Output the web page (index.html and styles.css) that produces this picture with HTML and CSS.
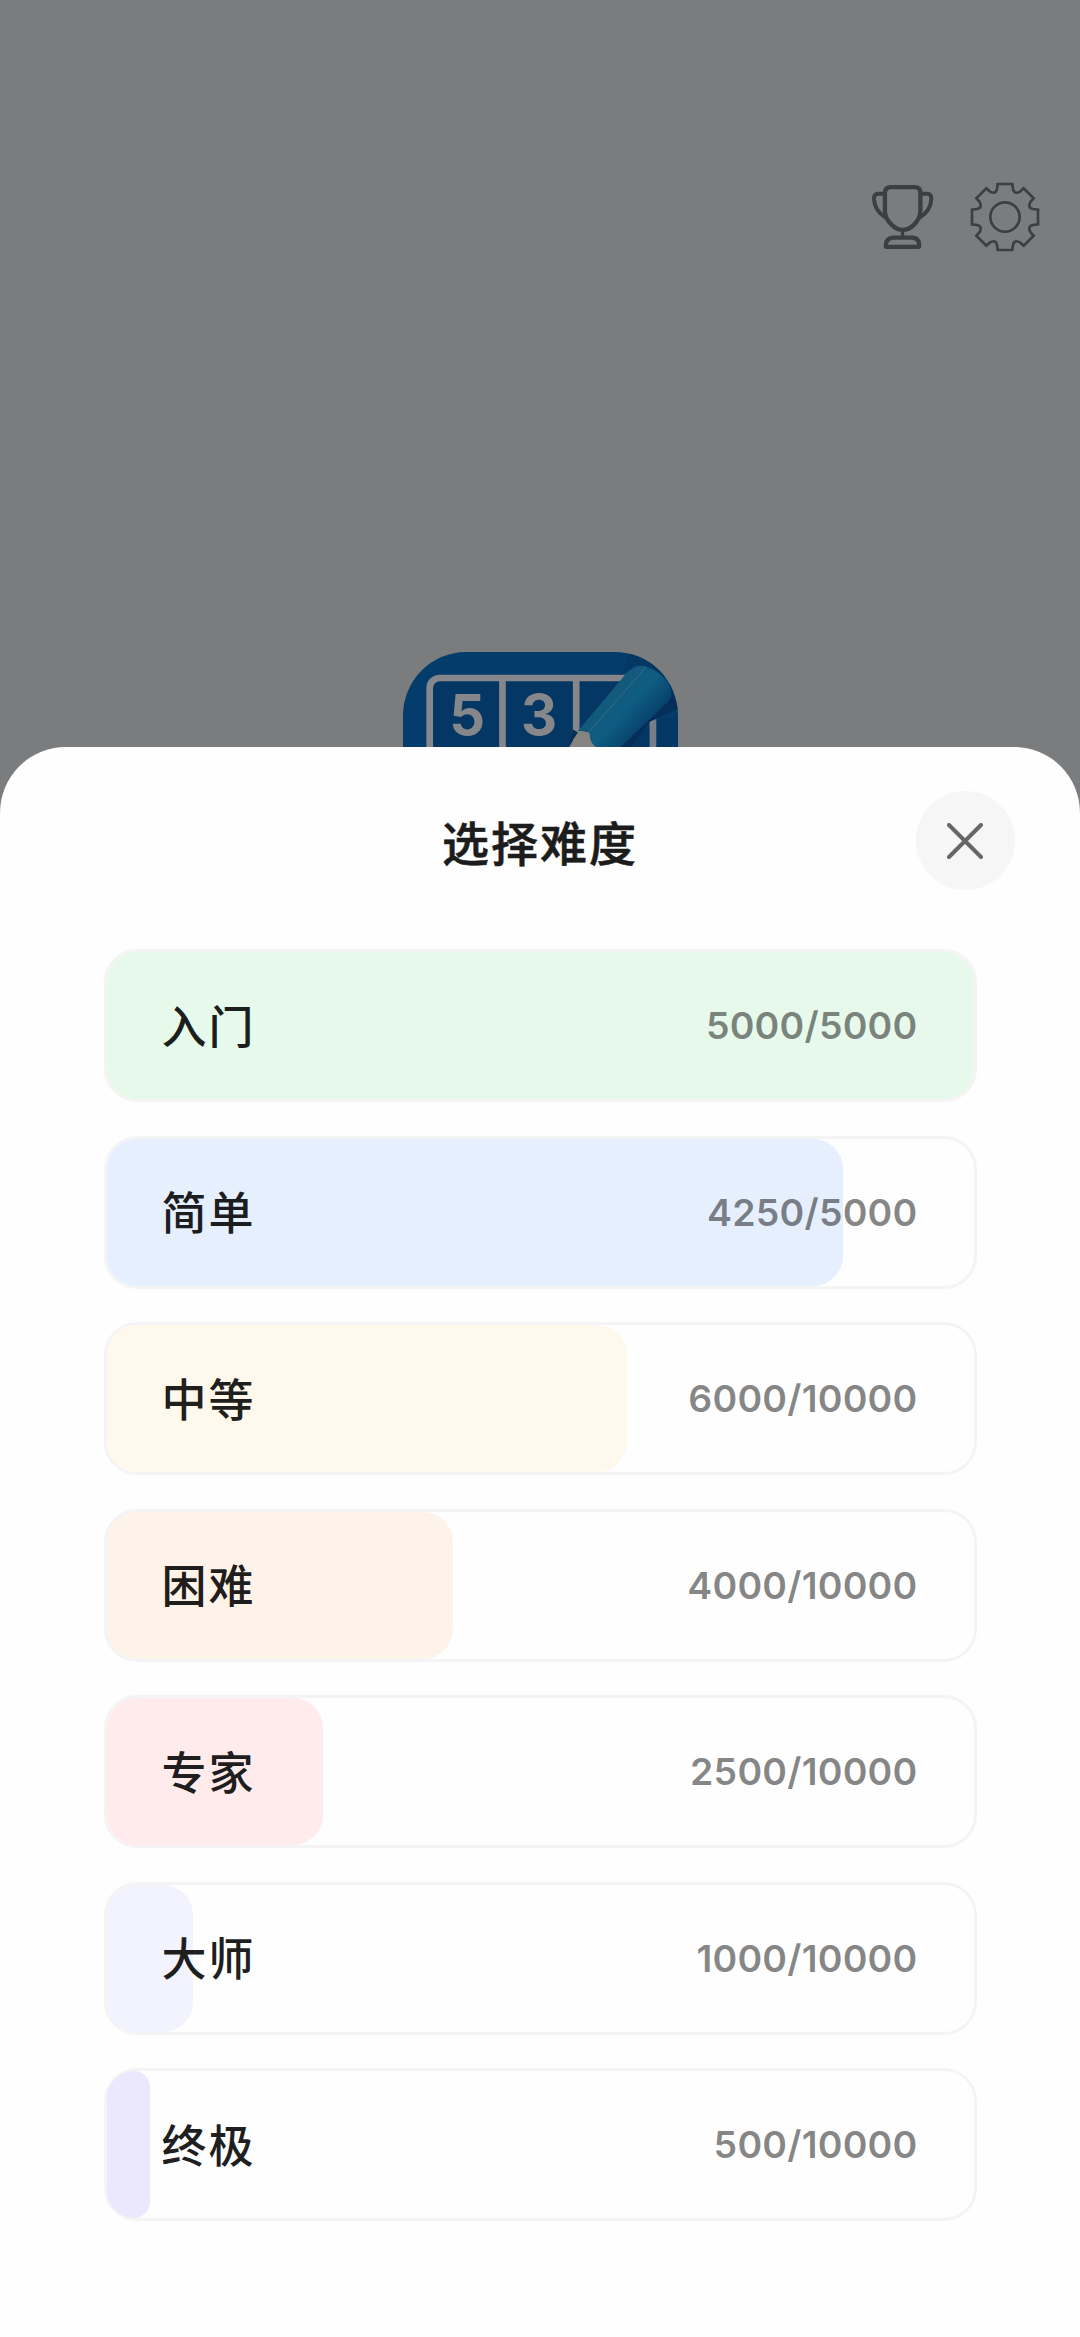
FILE: index.html
```html
<!DOCTYPE html>
<html lang="zh-CN">
<head>
<meta charset="utf-8">
<title>选择难度</title>
<link rel="stylesheet" href="styles.css">
</head>
<body>
<div class="home">
  <header class="toolbar">
    <svg class="trophy" viewBox="90 70 190 204" fill="none" stroke="#3b3f42" stroke-linejoin="round">
      <path stroke-width="13" d="M150 82H222Q239 82 239 100V152C239 186 208 211 186 211C164 211 132 186 132 152V100Q132 82 150 82Z"/>
      <path stroke-width="12" d="M130 102H112Q99 102 99 118C100 144 112 160 136 175M241 102H260Q272 102 272 118C271 144 259 160 235 175"/>
      <path stroke-width="10" d="M185 211V234"/>
      <path stroke-width="13" d="M135 262V254Q137 236 156 234H216Q234 236 235 254V262Z"/>
    </svg>
    <svg class="gear" viewBox="-105 -105 210 210" fill="none" stroke="#3b3f42" stroke-width="8">
      <path d="M-22-99L22-99 24-84Q28-66 46-77L56-86 86-56 77-46Q66-28 84-24L99-22 99 22 84 24Q66 28 77 46L86 56 56 86 46 77Q28 66 24 84L22 99-22 99-24 84Q-28 66-46 77L-56 86-86 56-77 46Q-66 28-84 24L-99 22-99-22-84-24Q-66-28-77-46L-86-56-56-86-46-77Q-28-66-24-84Z"/>
      <circle r="44"/>
    </svg>
  </header>
  <svg class="logo" viewBox="38 65 824 824">
    <defs>
      <linearGradient id="pencil" gradientUnits="userSpaceOnUse" x1="640" y1="190" x2="760" y2="300">
        <stop offset="0" stop-color="#14587a"/>
        <stop offset="0.5" stop-color="#0f5c82"/>
        <stop offset="1" stop-color="#074069"/>
      </linearGradient>
      <clipPath id="tile"><rect x="38" y="65" width="824" height="824" rx="190"/></clipPath>
    </defs>
    <g clip-path="url(#tile)">
      <rect x="38" y="65" width="824" height="824" fill="#043c6b"/>
      <rect x="118" y="143" width="669" height="669" rx="30" fill="#043763" stroke="#85878b" stroke-width="20"/>
      <path d="M336 143V812M557 143V812" stroke="#85878b" stroke-width="20"/>
      <text class="digit" x="230" y="314">5</text>
      <text class="digit" x="446" y="314">3</text>
      <path d="M692 133L740 100 862 160V260L797 268 700 360H890V60H720Z" fill="#043763"/>
      <path d="M862 235L777 275 700 380H640L840 160Z" fill="#052f5a"/>
      <path d="M797 268V360H777V285Z" fill="#777e88"/>
      <path d="M564 300L535 352V380H640V345L594 305Z" fill="#858481"/>
      <path d="M548 297L536 345 562 306Z" fill="#0a2f50"/>
      <path d="M562 302L706 130Q735 100 765 108Q815 125 838 168Q850 195 832 214L692 348 670 380H640L612 346Q597 335 597 308Q583 298 562 302Z" fill="url(#pencil)"/>
      <path d="M594 306L765 112" stroke="#2a6a86" stroke-width="3" fill="none"/>
    </g>
  </svg>
</div>

<main class="sheet">
  <header class="sheet-header">
    <h1 class="title">选择难度</h1>
    <button class="close" aria-label="关闭">
      <svg viewBox="0 0 36 36" class="close-icon"><path d="M2 2L34 34M34 2L2 34" stroke="#666" stroke-width="4" stroke-linecap="round"/></svg>
    </button>
  </header>
  <ul class="levels">
    <li class="level"><span class="fill green" style="width:100%"></span><span class="name">入门</span><span class="count">5000/5000</span></li>
    <li class="level"><span class="fill blue" style="width:85%"></span><span class="name">简单</span><span class="count">4250/5000</span></li>
    <li class="level"><span class="fill yellow" style="width:60%"></span><span class="name">中等</span><span class="count">6000/10000</span></li>
    <li class="level"><span class="fill orange" style="width:40%"></span><span class="name">困难</span><span class="count">4000/10000</span></li>
    <li class="level"><span class="fill red" style="width:25%"></span><span class="name">专家</span><span class="count">2500/10000</span></li>
    <li class="level"><span class="fill lavender" style="width:10%"></span><span class="name">大师</span><span class="count">1000/10000</span></li>
    <li class="level"><span class="fill violet" style="width:5%"></span><span class="name">终极</span><span class="count">500/10000</span></li>
  </ul>
</main>
</body>
</html>
```
FILE: styles.css
```css
* { box-sizing: border-box; }

body {
  margin: 0;
  position: relative;
  height: 2337px;
  overflow: hidden;
  background: #7b7c7e;
  font-family: Inter, "Noto Sans CJK SC", sans-serif;
}

.home {
  display: flex;
  flex-direction: column;
  align-items: center;
  padding-top: 182px;
}

.toolbar {
  display: flex;
  align-self: stretch;
  justify-content: flex-end;
  align-items: center;
  gap: 36px;
  height: 70px;
  padding-right: 40px;
}

.trophy { width: 63px; height: 68px; }
.gear { width: 70px; height: 70px; }

.logo {
  width: 275px;
  height: 275px;
  margin-top: 400px;
}

.digit {
  font-family: Inter, sans-serif;
  font-size: 168px;
  font-weight: 700;
  fill: #85878b;
  text-anchor: middle;
}

.sheet {
  position: absolute;
  left: 0;
  right: 0;
  bottom: 0;
  height: 1590px;
  padding: 44px 103.5px 0;
  border-radius: 66px 66px 0 0;
  background: #fefefe;
}

.sheet-header {
  display: grid;
  grid-template-columns: 99px 1fr 99px;
  align-items: center;
  margin-right: -38px;
  margin-left: -38px;
}

.title {
  grid-column: 2;
  margin: 0;
  padding-top: 7px;
  color: #1c1c1c;
  font-size: 47px;
  font-weight: 500;
  line-height: 92px;
  letter-spacing: 2px;
  text-align: center;
  -webkit-text-stroke: 0.6px #1c1c1c;
}

.close {
  display: flex;
  align-items: center;
  justify-content: center;
  width: 99px;
  height: 99px;
  padding: 0;
  border: 0;
  border-radius: 50%;
  background: #f6f6f6;
}

.close-icon { width: 36px; height: 36px; }

.levels {
  display: flex;
  flex-direction: column;
  gap: 33.5px;
  margin: 59px 0 0;
  padding: 0;
  list-style: none;
}

.level {
  position: relative;
  display: flex;
  align-items: center;
  justify-content: space-between;
  height: 153px;
  padding: 0 56px 0 55px;
  border: 3px solid #f4f4f4;
  border-radius: 33px;
}

/* progress bar behind the row's text */
.fill {
  position: absolute;
  inset: 0 auto 0 0;
  border-radius: 30px;
}

.green { background: #e6f9ea; }
.blue { background: #e5effe; }
.yellow { background: #fff8ec; }
.orange { background: #fef3e8; }
.red { background: #ffebeb; }
.lavender { background: #f3f2ff; }

.violet {
  border-radius: 27px 16px 16px 27px;
  background: #ebe8fe;
}

.name,
.count { position: relative; }

.name {
  padding-bottom: 3px;
  color: rgba(0, 0, 0, 0.9);
  font-size: 45px;
  font-weight: 500;
  letter-spacing: 2px;
}

.count {
  color: rgba(0, 0, 0, 0.48);
  font-size: 37.5px;
  font-weight: 600;
  letter-spacing: 0.2px;
}
```
